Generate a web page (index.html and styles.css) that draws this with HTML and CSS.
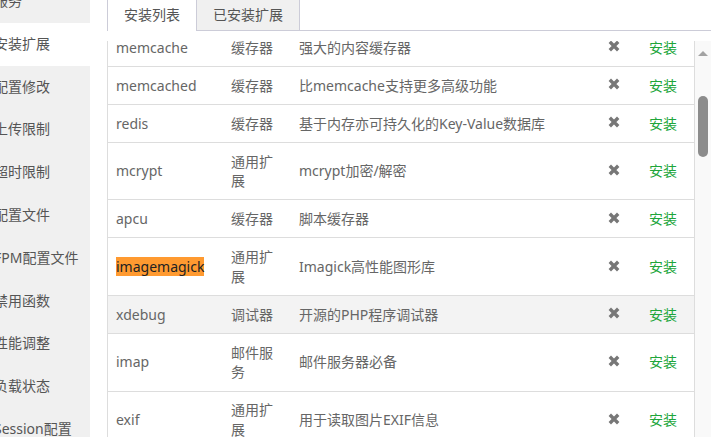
FILE: index.html
```html
<!DOCTYPE html>
<html lang="zh">
<head>
    <meta charset="UTF-8">
    <meta name="viewport" content="width=device-width, initial-scale=1.0">
    <title>PHP管理</title>
    <link rel="stylesheet" href="styles.css">
</head>
<body>
    <div class="sidebar">
        <ul class="menu">
            <li>服务</li>
            <li class="active">安装扩展</li>
            <li>配置修改</li>
            <li>上传限制</li>
            <li>超时限制</li>
            <li>配置文件</li>
            <li>FPM配置文件</li>
            <li>禁用函数</li>
            <li>性能调整</li>
            <li>负载状态</li>
            <li>Session配置</li>
        </ul>
    </div>

    <div class="main">
        <div class="tabs">
            <div class="tab active">安装列表</div>
            <div class="tab">已安装扩展</div>
            <div class="tab-fill"></div>
        </div>

        <div class="panel">
            <div class="table-wrap">
                <table class="ext-table">
                    <colgroup>
                        <col class="c-name">
                        <col class="c-type">
                        <col class="c-desc">
                        <col class="c-state">
                        <col class="c-op">
                    </colgroup>
                    <tbody>
                        <tr>
                            <td>memcache</td><td class="type">缓存器</td><td>强大的内容缓存器</td>
                            <td class="state"><svg class="icon-x" viewBox="0 0 12 12"><path d="M1.8 1.8L10.2 10.2M10.2 1.8L1.8 10.2"/></svg></td>
                            <td class="op">安装</td>
                        </tr>
                        <tr>
                            <td>memcached</td><td class="type">缓存器</td><td>比memcache支持更多高级功能</td>
                            <td class="state"><svg class="icon-x" viewBox="0 0 12 12"><path d="M1.8 1.8L10.2 10.2M10.2 1.8L1.8 10.2"/></svg></td>
                            <td class="op">安装</td>
                        </tr>
                        <tr>
                            <td>redis</td><td class="type">缓存器</td><td>基于内存亦可持久化的Key-Value数据库</td>
                            <td class="state"><svg class="icon-x" viewBox="0 0 12 12"><path d="M1.8 1.8L10.2 10.2M10.2 1.8L1.8 10.2"/></svg></td>
                            <td class="op">安装</td>
                        </tr>
                        <tr>
                            <td>mcrypt</td><td class="type">通用扩展</td><td>mcrypt加密/解密</td>
                            <td class="state"><svg class="icon-x" viewBox="0 0 12 12"><path d="M1.8 1.8L10.2 10.2M10.2 1.8L1.8 10.2"/></svg></td>
                            <td class="op">安装</td>
                        </tr>
                        <tr>
                            <td>apcu</td><td class="type">缓存器</td><td>脚本缓存器</td>
                            <td class="state"><svg class="icon-x" viewBox="0 0 12 12"><path d="M1.8 1.8L10.2 10.2M10.2 1.8L1.8 10.2"/></svg></td>
                            <td class="op">安装</td>
                        </tr>
                        <tr>
                            <td><span class="hl">imagemagick</span></td><td class="type">通用扩展</td><td>Imagick高性能图形库</td>
                            <td class="state"><svg class="icon-x" viewBox="0 0 12 12"><path d="M1.8 1.8L10.2 10.2M10.2 1.8L1.8 10.2"/></svg></td>
                            <td class="op">安装</td>
                        </tr>
                        <tr class="hover">
                            <td>xdebug</td><td class="type">调试器</td><td>开源的PHP程序调试器</td>
                            <td class="state"><svg class="icon-x" viewBox="0 0 12 12"><path d="M1.8 1.8L10.2 10.2M10.2 1.8L1.8 10.2"/></svg></td>
                            <td class="op">安装</td>
                        </tr>
                        <tr>
                            <td>imap</td><td class="type">邮件服务</td><td>邮件服务器必备</td>
                            <td class="state"><svg class="icon-x" viewBox="0 0 12 12"><path d="M1.8 1.8L10.2 10.2M10.2 1.8L1.8 10.2"/></svg></td>
                            <td class="op">安装</td>
                        </tr>
                        <tr>
                            <td>exif</td><td class="type">通用扩展</td><td>用于读取图片EXIF信息</td>
                            <td class="state"><svg class="icon-x" viewBox="0 0 12 12"><path d="M1.8 1.8L10.2 10.2M10.2 1.8L1.8 10.2"/></svg></td>
                            <td class="op">安装</td>
                        </tr>
                    </tbody>
                </table>
            </div>
            <!-- 滚动条 -->
            <div class="scrollbar">
                <div class="arrow-up"></div>
                <div class="thumb"></div>
            </div>
        </div>
    </div>
</body>
</html>
```

FILE: styles.css
```css
html, body {
    margin: 0;
    padding: 0;
    width: 100%;
    height: 100%;
    overflow: hidden;
}

body {
    display: flex;
    background: #fff;
    font-family: "Noto Sans", "Noto Sans CJK SC", sans-serif;
    font-size: 14px;
}

/* 左侧菜单 */
.sidebar {
    width: 90px;
    flex-shrink: 0;
    background: #f0f0f0;
    overflow: hidden;
}

.menu {
    list-style: none;
    margin: -20px 0 0 -6px; /* 菜单已滚动 */
    padding: 0;
}

.menu li {
    line-height: 42.8px;
    color: #555;
    white-space: nowrap;
}

.menu li.active {
    background: #fff;
}

/* 右侧内容 */
.main {
    flex: 1;
    display: flex;
    flex-direction: column;
    padding: 0 8px 0 17px;
    min-width: 0;
}

.tabs {
    display: flex;
    height: 31px;
    flex-shrink: 0;
}

.tab {
    box-sizing: border-box;
    height: 31px;
    line-height: 30px;
    padding: 0 16px;
    color: #555;
    background: #f0f0f0;
    border-right: 1px solid #ccccd8;
    border-bottom: 1px solid #ccccd8;
}

.tab.active {
    background: #fff;
    border-left: 1px solid #ccccd8;
    border-bottom: none;
}

.tab-fill {
    flex: 1;
    border-bottom: 1px solid #ccccd8;
}

.panel {
    flex: 1;
    display: flex;
    margin-top: 10px;
    border-left: 1px solid #ddd;
    min-height: 0;
}

.table-wrap {
    flex: 1;
    overflow: hidden;
    border-right: 1px solid #ddd;
}

.ext-table {
    width: 100%;
    margin-top: -12px; /* 列表已滚动 */
    border-collapse: collapse;
    table-layout: fixed;
}

.c-name { width: 115px; }
.c-type { width: 68px; }
.c-state { width: 39px; }
.c-op { width: 61px; }

.ext-table td {
    padding: 8.7px 8px;
    line-height: 1.4;
    color: #666;
    vertical-align: middle;
    border-bottom: 1px solid #ddd;
}

.ext-table td.type {
    padding-right: 13px;
}

.ext-table tr.hover td {
    background: #f3f3f3;
}

.ext-table td.state {
    padding: 0;
}

.ext-table td.op {
    text-align: right;
    padding-right: 17px;
    color: #20a53a;
}

.icon-x {
    display: block;
    width: 12px;
    height: 12px;
    margin: -2px auto 0;
    fill: none;
    stroke: #777;
    stroke-width: 3.4;
}

.hl {
    background: #ff9a30;
    color: #222;
}

/* 滚动条 */
.scrollbar {
    width: 16px;
    flex-shrink: 0;
    background: #f9f9f9;
    display: flex;
    flex-direction: column;
    align-items: center;
}

.arrow-up {
    width: 0;
    height: 0;
    margin-top: 10px;
    border-left: 5px solid transparent;
    border-right: 5px solid transparent;
    border-bottom: 5px solid #a3a3a3;
}

.thumb {
    width: 10px;
    height: 61px;
    margin-top: 40px;
    border-radius: 5px;
    background: #8c8c8c;
}
```
